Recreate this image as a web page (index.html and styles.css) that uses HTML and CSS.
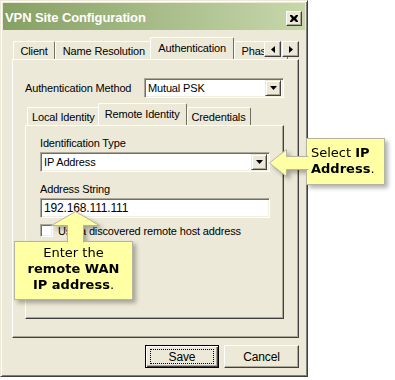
FILE: index.html
```html
<!DOCTYPE html>
<html lang="en">
<head>
  <meta charset="UTF-8" />
  <title>VPN Site Configuration</title>
  <link rel="stylesheet" href="styles.css">
</head>
<body>

  <div class="window">
    <div class="titlebar">
      <span class="title">VPN Site Configuration</span>
      <div class="close">
        <svg width="8" height="7" viewBox="0 0 8 7"><path d="M0 0h2l2 2 2-2h2v1L6 3.5 8 6v1H6L4 5 2 7H0V6l2-2.5L0 1z" fill="#000"/></svg>
      </div>
    </div>

    <div class="content">
      <div class="tabs">
        <div class="tab">Client</div>
        <div class="tab">Name Resolution</div>
        <div class="tab active">Authentication</div>
        <div class="tab">Phase 1</div>
        <div class="tab-scroll">
          <div class="scroll-btn"><svg width="4" height="7"><path d="M4 0v7L0 3.5z" fill="#000"/></svg></div>
          <div class="scroll-btn"><svg width="4" height="7"><path d="M0 0v7l4-3.5z" fill="#000"/></svg></div>
        </div>
      </div>

      <div class="panel">
        <div class="field-row">
          <span class="label">Authentication Method</span>
          <div class="select method">
            <span>Mutual PSK</span>
            <div class="drop"><svg width="7" height="4"><path d="M0 0h7L3.5 4z" fill="#000"/></svg></div>
          </div>
        </div>

        <div class="tabs inner-tabs">
          <div class="tab">Local Identity</div>
          <div class="tab active">Remote Identity</div>
          <div class="tab">Credentials</div>
        </div>

        <div class="panel inner-panel">
          <span class="label">Identification Type</span>
          <div class="select">
            <span>IP Address</span>
            <div class="drop"><svg width="7" height="4"><path d="M0 0h7L3.5 4z" fill="#000"/></svg></div>
          </div>
          <span class="label second">Address String</span>
          <div class="select input">192.168.111.111</div>
          <div class="check-row">
            <span class="checkbox"></span>
            <span>Use a discovered remote host address</span>
          </div>
        </div>
      </div>

      <div class="buttons">
        <div class="btn default"><span class="focus">Save</span></div>
        <div class="btn">Cancel</div>
      </div>
    </div>
  </div>

  <!-- callouts -->
  <div class="callout callout-ip">
    <svg class="arrow" width="41" height="47"><path d="M40.5 18.5H18.5V11.5L1.5 25L18.5 38.5V31.5H40.5" fill="#ffffa3" stroke="#b4b4a0"/></svg>
    <div class="bubble">Select <b>IP</b><br><b>Address</b>.</div>
  </div>

  <div class="callout callout-wan">
    <svg class="arrow" width="119" height="33"><path d="M53.5 32.5V15.5H37.5L61.5 1.5L85.5 15.5H69.5V32.5" fill="#ffffa3" stroke="#b4b4a0"/></svg>
    <div class="bubble">Enter the<br><b>remote WAN</b><br><b>IP address</b>.</div>
  </div>

</body>
</html>
```

FILE: styles.css
```css
body {
  margin: 0;
  background: #fff;
  font-family: 'Liberation Sans', Arial, sans-serif;
  font-size: 11px;
  letter-spacing: -0.15px;
  color: #000;
  position: relative;
  width: 395px;
  height: 380px;
  overflow: hidden;
}

.window {
  width: 308px;
  height: 377px;
  box-sizing: border-box;
  background: #ece9d8;
  border: 1px solid;
  border-color: #ece9d8 #404040 #404040 #ece9d8;
  box-shadow: inset 1px 1px #fff, inset -1px -1px #808080;
  padding: 2px;
  display: flex;
  flex-direction: column;
}

.titlebar {
  height: 27px;
  background: linear-gradient(to right, #86a064, #c7d7ab);
  display: flex;
  align-items: center;
  justify-content: space-between;
  padding: 0 3px 0 2px;
}

.title {
  color: #fff;
  font-weight: bold;
  font-size: 13px;
  letter-spacing: -0.1px;
  margin-top: 1px;
}

.close {
  width: 16px;
  height: 15px;
  box-sizing: border-box;
  background: #ece9d8;
  border: 1px solid;
  border-color: #fff #404040 #404040 #fff;
  box-shadow: inset -1px -1px #aca899;
  display: flex;
  align-items: center;
  justify-content: center;
  margin-top: 3px;
}

.content {
  flex: 1;
  padding: 7px 6px 0 9px;
  display: flex;
  flex-direction: column;
}

.tabs {
  display: flex;
  align-items: flex-end;
  height: 22px;
  padding-left: 1px;
  position: relative;
  overflow: hidden;
}

.tab {
  height: 18px;
  box-sizing: border-box;
  padding: 0 6.5px;
  border: 1px solid;
  border-bottom: none;
  border-color: #fff #716f64 #fff #fff;
  border-radius: 2px 2px 0 0;
  display: flex;
  align-items: center;
  white-space: nowrap;
  background: #ece9d8;
}

.tab.active {
  height: 23px;
  margin: 0 -1px -1px -2px;
  padding: 0 7px 3px;
  position: relative;
  z-index: 1;
}

.tabs > .tab.active + .tab {
  margin-left: 1px;
}

.tab-scroll {
  position: absolute;
  right: 0;
  bottom: 2px;
  display: flex;
  gap: 1px;
  background: #ece9d8;
  z-index: 2;
}

.scroll-btn {
  width: 17px;
  height: 16px;
  box-sizing: border-box;
  border: 1px solid;
  border-color: #fff #404040 #404040 #fff;
  box-shadow: inset -1px -1px #aca899;
  display: flex;
  align-items: center;
  justify-content: center;
  background: #ece9d8;
}

.panel {
  height: 279px;
  box-sizing: border-box;
  border: 1px solid;
  border-color: #fff #404040 #404040 #fff;
  box-shadow: inset -1px -1px #aca899;
  padding: 18px 14px 0 12px;
  display: flex;
  flex-direction: column;
}

.field-row {
  display: flex;
  align-items: center;
  justify-content: space-between;
  height: 20px;
}

.select {
  width: 230px;
  height: 20px;
  box-sizing: border-box;
  background: #fff;
  border: 1px solid;
  border-color: #aca899 #fff #fff #aca899;
  box-shadow: inset 1px 1px #716f64, inset -1px -1px #f1efe2;
  display: flex;
  align-items: center;
  justify-content: space-between;
  padding: 0 2px 0 3px;
  font-size: 11px;
}

.select.method {
  width: 140px;
}

.select.input {
  font-size: 12px;
  padding-left: 3px;
}

.drop {
  width: 16px;
  height: 16px;
  box-sizing: border-box;
  background: #ece9d8;
  border: 1px solid;
  border-color: #ece9d8 #404040 #404040 #ece9d8;
  box-shadow: inset 1px 1px #fff, inset -1px -1px #aca899;
  display: flex;
  align-items: center;
  justify-content: center;
}

.inner-tabs {
  margin-top: 5px;
  padding-left: 2px;
}

.inner-tabs .tab {
  padding: 0 4px;
}

.inner-tabs .tab.active {
  padding: 0 6px 3px;
}

.inner-panel {
  height: 194px;
  padding: 11px 0 0 14px;
  gap: 2px;
}

.label {
  line-height: 13px;
}

.label.second {
  margin-top: 9px;
}

.check-row {
  display: flex;
  align-items: center;
  gap: 5px;
  margin-top: 4px;
}

.checkbox {
  width: 13px;
  height: 13px;
  box-sizing: border-box;
  background: #fff;
  border: 1px solid;
  border-color: #aca899 #fff #fff #aca899;
  box-shadow: inset 1px 1px #716f64, inset -1px -1px #f1efe2;
}

.buttons {
  display: flex;
  justify-content: flex-end;
  gap: 5px;
  margin-top: 7px;
}

.btn {
  width: 75px;
  height: 23px;
  box-sizing: border-box;
  border: 1px solid;
  border-color: #fff #404040 #404040 #fff;
  box-shadow: inset -1px -1px #aca899;
  display: flex;
  align-items: center;
  justify-content: center;
  font-size: 12px;
}

.btn.default {
  width: 74px;
  border: 1px solid #000;
  box-shadow: inset 1px 1px #fff, inset -1px -1px #404040, inset -2px -2px #aca899;
}

.focus {
  width: 64px;
  height: 15px;
  border: 1px dotted #000;
  display: flex;
  align-items: center;
  justify-content: center;
  box-sizing: border-box;
}

.callout {
  position: absolute;
  filter: drop-shadow(3px 3px 2px rgba(0, 0, 0, 0.3));
  font-family: 'DejaVu Sans', Verdana, sans-serif;
  font-size: 13px;
  letter-spacing: 0;
  color: #000;
}

.callout .arrow {
  position: absolute;
  left: 0;
  top: 0;
}

.bubble {
  background: #ffffa3;
  border: 1px solid #b4b4a0;
  box-sizing: border-box;
  line-height: 16px;
}

.callout-ip {
  left: 268px;
  top: 138px;
  width: 117px;
  height: 47px;
}

.callout-ip .bubble {
  margin-left: 38px;
  width: 79px;
  height: 47px;
  padding: 6px 0 0 4px;
}

.callout-wan {
  left: 14px;
  top: 210px;
  width: 119px;
  height: 90px;
}

.callout-wan .bubble {
  margin-top: 31px;
  height: 59px;
  text-align: center;
  padding-top: 3px;
}

.callout-wan .arrow {
  z-index: 1;
}
```
